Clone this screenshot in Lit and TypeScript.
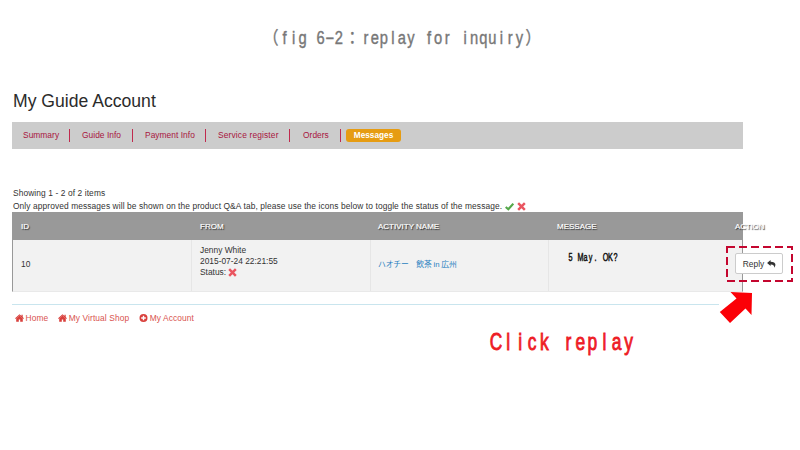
import { LitElement, html, css, svg } from "lit";
import { customElement, property } from "lit/decorators.js";

@customElement("fixed-text")
class FixedText extends LitElement {
  @property() text = "";
  @property({ type: Number }) pitch = 9;
  @property({ type: Number }) size = 18;
  @property({ type: Number }) squeeze = 0.8;
  static styles = css`
    :host { display: block; }
    svg { display: block; overflow: visible; }
    text { font-family: "Liberation Sans", "Noto Sans CJK JP", sans-serif; fill: currentColor; stroke: currentColor; stroke-width: var(--weight, 0.4px); text-anchor: middle; }
  `;
  render() {
    let pen = 0;
    const xs = [...this.text].map((ch) => {
      const w = /[（）：]/.test(ch) ? this.pitch * 2 : this.pitch;
      const x = (pen + w / 2) / this.squeeze;
      pen += w;
      return x.toFixed(2);
    });
    return html`<svg width=${pen} height=${this.size * 1.2}>
      ${svg`<text style="font-size:${this.size}px" transform="scale(${this.squeeze} 1)" y=${this.size} x=${xs.join(" ")}>${this.text}</text>`}
    </svg>`;
  }
}

const cross = html`<svg class="mark" viewBox="0 0 10 10"><path d="M1.3 1.3L8.7 8.7M8.7 1.3L1.3 8.7" stroke="#ea5560" stroke-width="2.7" fill="none"/></svg>`;
const check = html`<svg class="mark check" viewBox="0 0 10 10"><path d="M.8 5.5L3.7 8L9.2 1.8" stroke="#55a84a" stroke-width="2.4" fill="none"/></svg>`;
const home = html`<svg class="ico" viewBox="0 0 9 8"><path d="M4.5 .2L.1 4.2l.6.7L4.5 1.5l3.8 3.4.6-.7L7.7 3.1V.7H6.5V2z"/><path d="M4.5 1.6L1.2 4.6V7.8H3.8V5.5H5.2V7.8H7.8V4.6z"/></svg>`;
const circle = html`<svg class="ico" viewBox="0 0 9 8"><path fill-rule="evenodd" d="M4.5 0a4 4 0 1 0 0 8 4 4 0 0 0 0-8zM3.8 1.8H5.2V3.3H6.8V4.7H5.2V6.2H3.8V4.7H2.2V3.3H3.8z"/></svg>`;

@customElement("app-root")
class AppRoot extends LitElement {
  static styles = css`
    :host { display: block; position: relative; width: 800px; height: 450px; overflow: hidden; background: #fff; color: #333; font: 8.4px/12.5px "Liberation Sans", "Noto Sans CJK JP", sans-serif; }
    .figure { position: absolute; left: 262px; top: 27px; color: #777; }
    main { width: 731px; padding: 90px 0 0 12px; }
    h1 { margin: 0; padding-left: 1px; font-size: 17.6px; font-weight: 400; line-height: 22px; height: 32px; color: #2b2b2b; }
    nav { display: grid; grid-template-columns: 58px 63px 73px 84px 51px 1fr; height: 26.5px; background: #ccc; align-items: center; color: #a81440; letter-spacing: 0.04px; }
    nav span { border-right: 1px solid #c02a4e; height: 13px; line-height: 13px; padding-left: 12px; box-sizing: border-box; white-space: nowrap; }
    nav span:first-child { padding-left: 11px; }
    nav span:nth-child(4) { letter-spacing: 0.15px; }
    nav span:nth-child(5) { padding-left: 13px; }
    nav b { margin-left: 5px; width: 55px; height: 13px; line-height: 13px; border-radius: 3px; background: #e69c12; color: #fff; text-align: center; font-size: 8.2px; }
    .info { padding: 38.5px 0 0 1px; height: 25px; white-space: nowrap; letter-spacing: 0.1px; }
    .mark { width: 9px; height: 9px; vertical-align: -2px; margin-left: 1px; }
    .info .mark { margin-left: 0; margin-right: 1px; }
    .head, .row { display: grid; grid-template-columns: 179px 178px 179px 179px 16px; }
    .head { background: #999; height: 28px; line-height: 29px; color: #fff; font-weight: 400; font-size: 8px; -webkit-text-stroke: 0.2px #fff; text-shadow: 1px 1px 1px #222; }
    .head span { padding-left: 9px; white-space: nowrap; }
    .head span:last-child { padding-left: 8px; letter-spacing: -0.2px; }
    .row { height: 52px; background: #f2f2f2; box-sizing: border-box; border-left: 1px solid #999; border-right: 1px solid #999; border-bottom: 1px solid #e9e9e9; line-height: 11px; grid-template-columns: 179px 179px 178px 179px 14px; }
    .cell { display: flex; flex-direction: column; justify-content: center; padding-left: 8px; border-right: 1px solid #e6e6e6; box-sizing: border-box; white-space: nowrap; }
    .cell:first-child { padding-bottom: 2px; }
    .cell:nth-child(n + 4) { border-right: 0; }
    .from { padding-bottom: 8px; }
    .from .mark { margin-left: 2px; }
    .activity { color: #2a7fc0; font-size: 7.8px; letter-spacing: -0.15px; white-space: pre; padding-left: 7px; padding-bottom: 3px; }
    .message { justify-content: flex-start; padding: 11px 0 0 19px; color: #111; --weight: 0.45px; }
    .action { padding: 0 0 4px 7px; }
    button { width: 48px; height: 21px; flex: none; background: #fff; border: 1px solid #ccc; border-radius: 2px; padding: 0 0 0 1px; display: flex; align-items: center; justify-content: center; gap: 3px; font: inherit; line-height: 12px; color: #333; box-sizing: border-box; }
    button svg { width: 9px; height: 8px; fill: #333; }
    hr { margin: 12px 0 0; width: 707px; border: 0; border-top: 1px solid #c9e5ee; }
    footer { display: flex; gap: 10px; padding: 7px 0 0 3px; color: #d9534f; letter-spacing: 0.1px; }
    footer span { display: flex; align-items: center; gap: 1.5px; white-space: nowrap; }
    .ico { width: 9px; height: 8px; fill: #d9403c; }
    .callout { position: absolute; left: 0; top: 0; pointer-events: none; }
    .click { position: absolute; left: 490px; top: 327px; color: #ee1c25; --weight: 0.9px; }
  `;
  render() {
    return html`
      <fixed-text class="figure" text="（fig 6−2：replay for inquiry）" .pitch=${9.03} .size=${17.5} .squeeze=${0.84}></fixed-text>
      <main>
        <h1>My Guide Account</h1>
        <nav>
          <span>Summary</span><span>Guide Info</span><span>Payment Info</span><span>Service register</span><span>Orders</span><b>Messages</b>
        </nav>
        <div class="info">
          <div>Showing 1 - 2 of 2 items</div>
          <div>Only approved messages will be shown on the product Q&amp;A tab, please use the icons below to toggle the status of the message. ${check} ${cross}</div>
        </div>
        <div class="head"><span>ID</span><span>FROM</span><span>ACTIVITY NAME</span><span>MESSAGE</span><span>ACTION</span></div>
        <div class="row">
          <div class="cell">10</div>
          <div class="cell from"><div>Jenny White</div><div>2015-07-24 22:21:55</div><div>Status:${cross}</div></div>
          <div class="cell activity">ハオチー　飲茶 in 広州</div>
          <div class="cell message"><fixed-text text="5 May. OK?" .pitch=${5} .size=${10} .squeeze=${0.72}></fixed-text></div>
          <div class="cell action"><button>Reply<svg viewBox="0 0 9 8"><path d="M3.6 .1L.1 3.1l3.5 3V4.4C6 4.3 7.2 5 7.3 7.7 9.9 4.2 7.8 1.8 3.6 1.8z"/></svg></button></div>
        </div>
        <hr />
        <footer><span>${home}Home</span><span>${home}My Virtual Shop</span><span>${circle}My Account</span></footer>
      </main>
      <svg class="callout" width="800" height="450">
        <rect x="727" y="247" width="65" height="34" fill="none" stroke="#c4062f" stroke-width="2" stroke-dasharray="8 4"/>
        <path d="M730.5 292L752 293L751.5 315L745.5 308.5L730 323L719.8 312L736.5 298.5z" fill="#fb0007"/>
      </svg>
      <fixed-text class="click" text="Click replay" .pitch=${12.05} .size=${23.5} .squeeze=${0.74}></fixed-text>
    `;
  }
}
